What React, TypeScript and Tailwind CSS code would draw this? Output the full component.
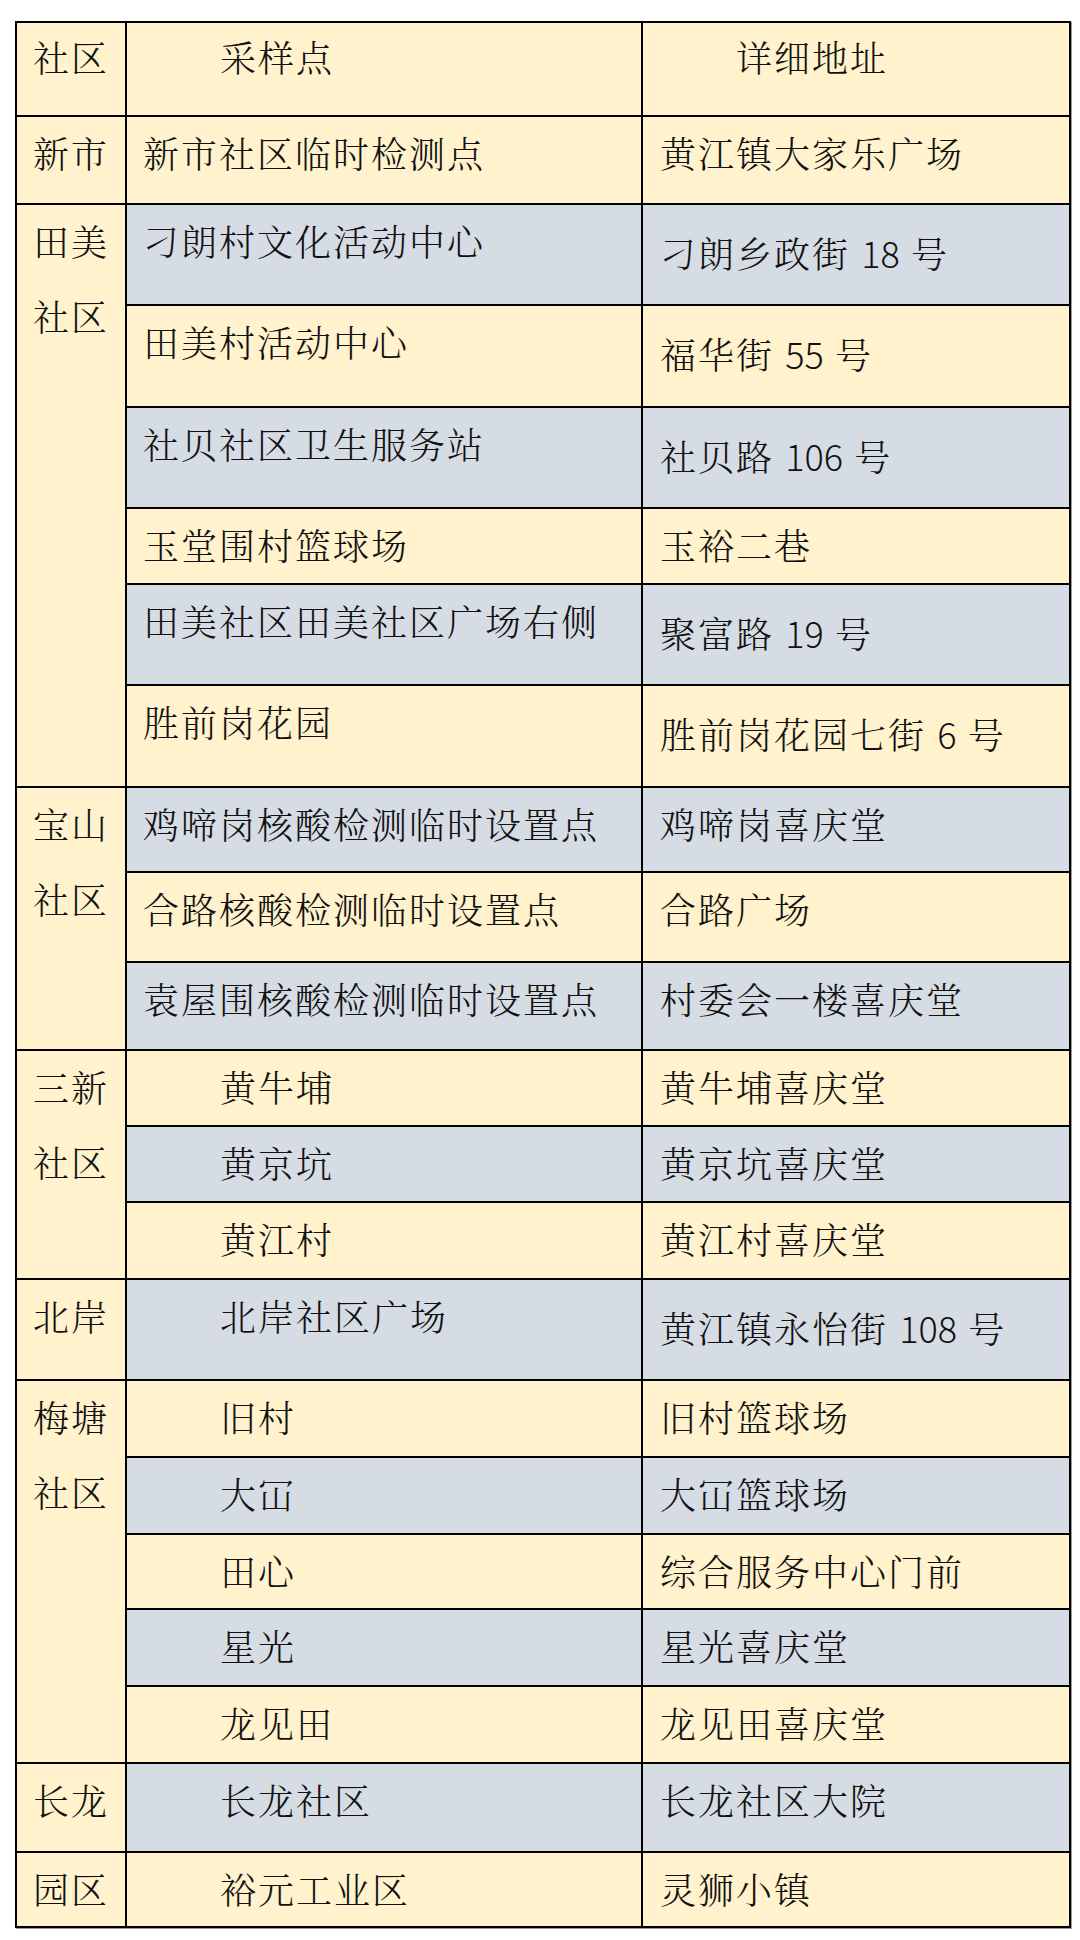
import React from 'react';

type Row = {
  h: number;
  site: string;
  addr: string;
  indent?: boolean;
  low?: boolean;
};

type Group = {
  name: string[];
  rows: Row[];
};

const groups: Group[] = [
  {
    name: ['新市'],
    rows: [{ h: 88, site: '新市社区临时检测点', addr: '黄江镇大家乐广场' }],
  },
  {
    name: ['田美', '社区'],
    rows: [
      { h: 101, site: '刁朗村文化活动中心', addr: '刁朗乡政街 18 号', low: true },
      { h: 102, site: '田美村活动中心', addr: '福华街 55 号', low: true },
      { h: 101, site: '社贝社区卫生服务站', addr: '社贝路 106 号', low: true },
      { h: 76, site: '玉堂围村篮球场', addr: '玉裕二巷' },
      { h: 101, site: '田美社区田美社区广场右侧', addr: '聚富路 19 号', low: true },
      { h: 102, site: '胜前岗花园', addr: '胜前岗花园七街 6 号', low: true },
    ],
  },
  {
    name: ['宝山', '社区'],
    rows: [
      { h: 85, site: '鸡啼岗核酸检测临时设置点', addr: '鸡啼岗喜庆堂' },
      { h: 90, site: '合路核酸检测临时设置点', addr: '合路广场' },
      { h: 88, site: '袁屋围核酸检测临时设置点', addr: '村委会一楼喜庆堂' },
    ],
  },
  {
    name: ['三新', '社区'],
    rows: [
      { h: 76, site: '黄牛埔', addr: '黄牛埔喜庆堂', indent: true },
      { h: 76, site: '黄京坑', addr: '黄京坑喜庆堂', indent: true },
      { h: 77, site: '黄江村', addr: '黄江村喜庆堂', indent: true },
    ],
  },
  {
    name: ['北岸'],
    rows: [{ h: 101, site: '北岸社区广场', addr: '黄江镇永怡街 108 号', indent: true, low: true }],
  },
  {
    name: ['梅塘', '社区'],
    rows: [
      { h: 77, site: '旧村', addr: '旧村篮球场', indent: true },
      { h: 77, site: '大冚', addr: '大冚篮球场', indent: true },
      { h: 75, site: '田心', addr: '综合服务中心门前', indent: true },
      { h: 77, site: '星光', addr: '星光喜庆堂', indent: true },
      { h: 77, site: '龙见田', addr: '龙见田喜庆堂', indent: true },
    ],
  },
  {
    name: ['长龙'],
    rows: [{ h: 89, site: '长龙社区', addr: '长龙社区大院', indent: true }],
  },
  {
    name: ['园区'],
    rows: [{ h: 75, site: '裕元工业区', addr: '灵狮小镇', indent: true }],
  },
];

const BEIGE = 'bg-[#fff2cc]';
const GRAY = 'bg-[#d6dce4]';

// house numbers are set in the sans face, without the extra tracking
function Addr({ text }: { text: string }) {
  const parts = text.split(/(\d+)/);
  return (
    <>
      {parts.map((p, i) =>
        /^\d+$/.test(p) ? (
          <span key={i} className="tracking-normal" style={{ fontFamily: '"Noto Sans CJK SC", sans-serif' }}>
            {p}
          </span>
        ) : (
          <React.Fragment key={i}>{p}</React.Fragment>
        )
      )}
    </>
  );
}

export default function App() {
  let idx = 0;

  return (
    <div
      className="min-h-[1940px] w-[1080px] bg-white pt-[21px] text-[36px] font-light leading-[40px] tracking-[2px] text-[#111]"
      style={{ fontFamily: '"Noto Serif CJK SC", "Noto Sans CJK SC", "Noto Sans", sans-serif' }}
    >
      <div className="ml-[15px] w-[1056px] border-2 border-black shadow-[1px_1px_0_#9a9a9a]">
        {/* header */}
        <div className={`flex h-[92px] ${BEIGE}`}>
          <div className="w-[110px] shrink-0 border-r-2 border-black pl-[16px] pt-[14px] whitespace-nowrap">社区</div>
          <div className="w-[516px] shrink-0 border-r-2 border-black pl-[93px] pt-[14px] whitespace-nowrap">采样点</div>
          <div className="flex-1 pl-[93px] pt-[14px] whitespace-nowrap">详细地址</div>
        </div>

        {groups.map((g) => (
          <div key={g.name.join('')} className="flex">
            {/* 社区 */}
            <div className={`w-[110px] shrink-0 border-t-2 border-r-2 border-black ${BEIGE} pl-[16px] pt-[16px]`}>
              <div className="flex flex-col gap-[35px]">
                {g.name.map((n) => (
                  <div key={n} className="whitespace-nowrap">{n}</div>
                ))}
              </div>
            </div>

            {/* 采样点 + 地址 */}
            <div className="flex flex-1 flex-col">
              {g.rows.map((r) => {
                const bg = idx++ % 2 === 1 ? GRAY : BEIGE;
                return (
                  <div
                    key={r.site}
                    className={`flex border-t-2 border-black ${bg}`}
                    style={{ height: r.h }}
                  >
                    <div
                      className={`w-[516px] shrink-0 border-r-2 border-black pt-[16px] whitespace-nowrap ${
                        r.indent ? 'pl-[93px]' : 'pl-[16px]'
                      }`}
                    >
                      {r.site}
                    </div>
                    <div className={`flex-1 pl-[17px] whitespace-nowrap ${r.low ? 'pt-[27px]' : 'pt-[16px]'}`}>
                      <Addr text={r.addr} />
                    </div>
                  </div>
                );
              })}
            </div>
          </div>
        ))}
      </div>
    </div>
  );
}
